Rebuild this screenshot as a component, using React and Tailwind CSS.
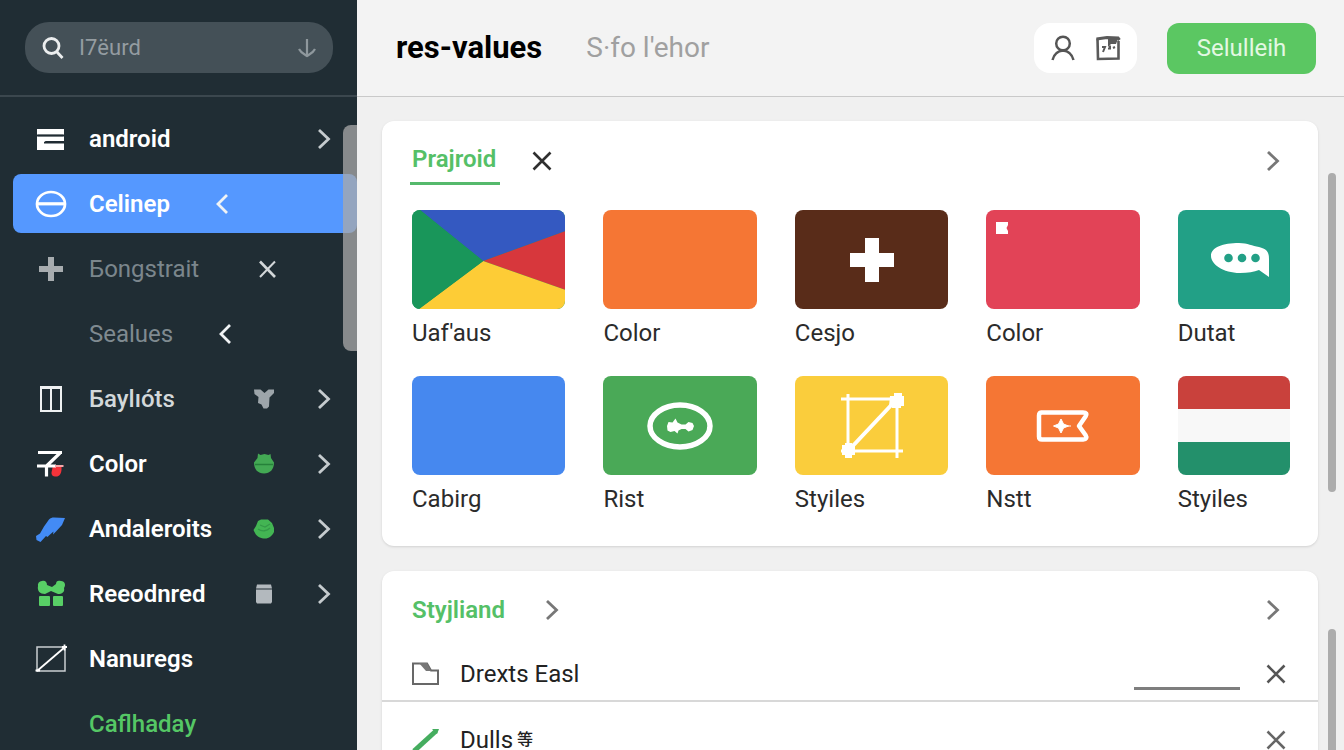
import { useState } from 'react'

const Chevron = ({ left = false, className = '' }) => (
  <svg viewBox="0 0 16 24" className={`w-4 h-6 shrink-0 ${className}`} fill="none" stroke="currentColor" strokeWidth="2.8">
    {left ? <path d="M13 3 4 12l9 9" /> : <path d="m2 3 9.500 9L2 21" />}
  </svg>
)

const Cross = ({ className = '' }) => (
  <svg viewBox="0 0 20 20" className={`w-5 h-5 shrink-0 ${className}`} fill="none" stroke="currentColor" strokeWidth="2.6">
    <path d="m1.5 1.5 17 17m0-17-17 17" />
  </svg>
)

// Iconos del menú lateral
const icons = {
  stack: (
    <svg viewBox="0 0 32 32" className="w-8 h-8" fill="#fff">
      <path d="M2 6h27v5.500H2zM2 13.500h27v4.500H11l-2 1v1.500h20V27H2z" />
      <path d="M3 12.500h25M10 19.300h19" stroke="#202c33" strokeWidth="1.500" />
    </svg>
  ),
  minusCircle: (
    <svg viewBox="0 0 32 32" className="w-8 h-8" fill="none" stroke="#fff" strokeWidth="2.700">
      <ellipse cx="16" cy="16" rx="14" ry="12" />
      <path d="M3 15.800h26" strokeWidth="3.200" />
    </svg>
  ),
  plus: (
    <svg viewBox="0 0 32 32" className="w-8 h-8" fill="none" stroke="#a7acaf" strokeWidth="6">
      <path d="M16 4v24M4 16h24" />
    </svg>
  ),
  columns: (
    <svg viewBox="0 0 32 32" className="w-8 h-8" fill="none" stroke="#eef1f2" strokeWidth="2">
      <path d="M6 4h20v24H6zM16 4v24" />
      <path d="M5 4.500h22" strokeWidth="3" />
    </svg>
  ),
  tint: (
    <svg viewBox="0 0 32 32" className="w-8 h-8" fill="none">
      <path d="M18 17.500h8.500v4.500c-.5 4-2 6.500-5.500 6.500s-4.500-1.500-4.500-4z" fill="#f5333a" />
      <path d="M3 4.500h24M25 5 11.500 18v10.500M2 18h19" stroke="#fff" strokeWidth="3.200" />
      <path d="M20 18h8.500" stroke="#f4a7aa" strokeWidth="2" />
    </svg>
  ),
  brush: (
    <svg viewBox="0 0 32 32" className="w-8 h-8" fill="#438bf5">
      <path d="M14 6.500c1.500-1.500 3-2 5-2l11 .5-3 7-6 6.500-3 3 .5-3-4 3.500-2 2-1.500-1-5.500 6-4-2-.5-4 4-2.500 4-7z" />
    </svg>
  ),
  gift: (
    <svg viewBox="0 0 32 32" className="w-8 h-8" fill="#58cf66">
      <rect x="4" y="18" width="11" height="10" rx="1" />
      <rect x="18" y="18" width="10" height="10" rx="1" />
      <path d="M3 8a4 4 0 0 1 4-5c3-1 5 1 5 4l5 2 4-3c0-3 2-4 5-3 4 0 5 4 3 7 1 4-2 6-6 6L16 13l-6 3C5 16 2 13 3 8z" />
    </svg>
  ),
  vector: (
    <svg viewBox="0 0 32 32" className="w-8 h-8" fill="none" stroke="#c9ced1" strokeWidth="1.500">
      <path d="M2 4h28v24H2z" />
      <path d="M2 28 30 4" stroke="#fff" strokeWidth="1.800" />
      <path d="M27 4h6M29.500 1.500v6M.5 27.500H5" stroke="#fff" strokeWidth="1.800" />
    </svg>
  ),
}

const badges = {
  cross: (
    <svg viewBox="0 0 24 24" className="w-6 h-6" fill="none" stroke="#d3d7d9">
      <path d="M8 4.500 23 20" strokeWidth="2.600" />
      <path d="M23 4.500 8 20" strokeWidth="2" />
    </svg>
  ),
  shirt: (
    <svg viewBox="0 0 24 24" className="w-6 h-6" fill="#9da5aa">
      <path d="M2 2.500h6.500l4 3.500 4-3.500H22V6l-4.500 4.500-.5 9-2 2h-3.500l-2-4L6 16l.5-6L2.500 7z" />
    </svg>
  ),
  bot: (
    <svg viewBox="0 0 24 24" className="w-6 h-6" fill="#43a954">
      <path d="m6 1.500 2.500 1.500 4-1 4 1 2-1 .5 4 3 4.500c0 7-4 11-10 11s-10-4-10-11L5.500 6z" />
      <path d="M3 12.500h18" stroke="#26813a" strokeWidth="1.500" />
    </svg>
  ),
  leaf: (
    <svg viewBox="0 0 24 24" className="w-6 h-6" fill="#43b553">
      <path d="m6 4 3-1.500h7l4 3.500 2 5v4c-2 4-5 6.500-9 6.500s-8-1.500-10-5.500L1.500 13 4 9z" />
      <path d="m8 8 5 2 5-3M6 12c4 3 9 2 12-1" fill="none" stroke="#349a48" strokeWidth="1.300" />
    </svg>
  ),
  jar: (
    <svg viewBox="0 0 24 24" className="w-6 h-6" fill="#b3b9be">
      <path d="M5 2.500h14l1 4H4zM4 7.500h16V20l-1 1.500H5L4 20z" />
    </svg>
  ),
}

const menu = [
  { icon: 'stack', label: 'android', chevron: true, tone: 'text-white font-semibold' },
  { icon: 'minusCircle', label: 'Celinep', back: true, tone: 'text-white font-semibold' },
  { icon: 'plus', label: 'Бongstrait', badge: 'cross', tone: 'text-[#7b868c]' },
  { label: 'Sealues', back: true, tone: 'text-[#7f8a90]' },
  { icon: 'columns', label: 'Бaylıóts', badge: 'shirt', chevron: true, tone: 'text-[#d3d8da] font-medium' },
  { icon: 'tint', label: 'Color', badge: 'bot', chevron: true, tone: 'text-white font-semibold' },
  { icon: 'brush', label: 'Andaleroits', badge: 'leaf', chevron: true, tone: 'text-white font-semibold' },
  { icon: 'gift', label: 'Reeodnred', badge: 'jar', chevron: true, tone: 'text-white font-semibold' },
  { icon: 'vector', label: 'Nanuregs', tone: 'text-white font-semibold' },
  { label: 'Caflhaday', tone: 'text-[#55c765] font-medium' },
]

// Dibujos de cada muestra
const flagFan = (
  <svg viewBox="0 0 153 99" preserveAspectRatio="none" className="w-full h-full">
    <path d="M8 0h145v21L71 51z" fill="#3459c1" />
    <path d="M153 21v59L71 51z" fill="#d7373c" />
    <path d="M153 80v19H7l64-48z" fill="#fdcc36" />
    <path d="M8 0 71 51 7 99H0V0z" fill="#19965a" />
  </svg>
)

const flagStripes = (
  <div className="flex flex-col w-full h-full">
    <div className="flex-1 bg-[#c9413c]" />
    <div className="flex-1 bg-[#f8f8f8]" />
    <div className="flex-1 bg-[#23906b]" />
  </div>
)

const bigPlus = (
  <svg viewBox="0 0 44 44" className="w-11 h-11" fill="#fff">
    <path d="M15 0h14v15h15v14H29v15H15V29H0V15h15z" />
  </svg>
)

const cornerMark = (
  <svg viewBox="0 0 12 12" className="w-3 h-3 self-start mr-auto ml-2.5 mt-3" fill="#fff">
    <path d="M0 0h12v3l-1.500 3L12 9v3H0z" />
  </svg>
)

const bubble = (
  <svg viewBox="0 0 60 36" className="w-[60px] h-9 ml-3" fill="#fff">
    <path d="M1 14C1 5 13 1 29 1c9 0 13 3 20 4 8 2 10 5 10 12v18l-10-7c-5 2-11 3-19 3C13 31 1 22 1 14z" />
    <circle cx="18.500" cy="16" r="4.300" fill="#22a086" />
    <circle cx="32" cy="16" r="4.300" fill="#22a086" />
    <circle cx="45.500" cy="16" r="4.300" fill="#22a086" />
  </svg>
)

const ring = (
  <svg viewBox="0 0 66 48" className="w-[66px] h-12" fill="none">
    <ellipse cx="33" cy="24" rx="30" ry="21" stroke="#fff" strokeWidth="5.500" />
    <path d="m20 24 1.500-4 4 .5 3-4 2 4 4 2h4l3-2.500 4 1 1.500 3-1.500 4-4 1.500-3-2.500h-4l-3 1.500-1 3-3-2.500-4 1-3-1.500z" fill="#fff" />
  </svg>
)

const bezier = (
  <svg viewBox="0 0 64 66" className="w-16 h-[66px]" fill="none" stroke="#fff" strokeWidth="3">
    <path d="M1 6h60M1 58h62M8 1v58M57 6v59" />
    <path d="M8 58 57 6" strokeWidth="4" />
    <path d="M50 3h4V0h8v3h2v10h-3v2h-9v-2h-3zM2 52h3v-2h7v2h3v10h-3v3H5v-3H2z" fill="#fff" stroke="none" />
  </svg>
)

const ticket = (
  <svg viewBox="0 0 54 34" className="w-[54px] h-[34px]" fill="none" stroke="#fff" strokeWidth="4.500" strokeLinejoin="round">
    <path d="M5 3.500h42q5 0 2.500 4L43 17l6.500 9q2.500 4-2.500 4.500H6q-3 0-3-3v-21q0-3 3-3z" />
    <path d="m25 10 2.500 5 5 2-5 2-2.500 5-2.500-5-5-2 5-2zM32 17h3" fill="#fff" strokeWidth="1" />
  </svg>
)

const swatches = [
  { label: "Uaf'aus", bg: 'bg-[#19965a]', art: flagFan },
  { label: 'Color', bg: 'bg-[#f57634]' },
  { label: 'Cesjo', bg: 'bg-[#592c19]', art: bigPlus },
  { label: 'Color', bg: 'bg-[#e24357]', art: cornerMark },
  { label: 'Dutat', bg: 'bg-[#22a086]', art: bubble },
  { label: 'Cabirg', bg: 'bg-[#4688ef]' },
  { label: 'Rist', bg: 'bg-[#4aa957]', art: ring },
  { label: 'Styiles', bg: 'bg-[#facd3c]', art: bezier },
  { label: 'Nstt', bg: 'bg-[#f57634]', art: ticket },
  { label: 'Styiles', bg: 'bg-[#f8f8f8]', art: flagStripes },
]

function Sidebar() {
  const [active, setActive] = useState('Celinep')

  return (
    <aside className="relative w-[357px] shrink-0 bg-[#202d34] overflow-hidden">
      <div className="h-[95px] box-content border-b-2 border-[#3b474e] pl-[25px] pr-6 flex items-center">
        <label className="flex items-center w-full h-[51px] rounded-3xl bg-[#445057] pl-4 pr-4">
          <svg viewBox="0 0 24 24" className="w-6 h-6 shrink-0" fill="none" stroke="#eceeef" strokeWidth="2.800">
            <circle cx="10.500" cy="10" r="7.500" />
            <path d="m15.500 15.500 6 6.500" />
          </svg>
          <input type="text" aria-label="Buscar" placeholder="I7ëurd" className="flex-1 min-w-0 ml-[14px] bg-transparent outline-none text-[22px] text-white placeholder:text-[#949ca1]" />
          <svg viewBox="0 0 20 20" className="w-5 h-5 shrink-0" fill="none" stroke="#8f989d" strokeWidth="2.200">
            <path d="M10 1v17M2 11c2 4 5 5 8 7 3-2 6-3 8-7" />
          </svg>
        </label>
      </div>

      <nav className="flex flex-col gap-1.5 pt-3 pl-[13px]">
        {menu.map((item) => (
          <button
            key={item.label}
            onClick={() => setActive(item.label)}
            className={`flex items-center h-[59px] shrink-0 rounded-lg pl-[22px] pr-6 text-2xl text-left ${item.tone} ${active === item.label ? 'bg-[#5598ff]' : ''}`}
          >
            <span className="w-8 shrink-0 mr-[22px]">{icons[item.icon]}</span>
            {item.back ? (
              <span className="flex items-center gap-11">
                {item.label}
                <Chevron left className="text-[#f0f3f5]" />
              </span>
            ) : (
              <span className="w-[163px] shrink-0">{item.label}</span>
            )}
            {item.badge && badges[item.badge]}
            {item.chevron && <Chevron className="ml-auto text-[#c5cbce]" />}
          </button>
        ))}
      </nav>

      {/* Barra de desplazamiento sobre el menú */}
      <div className="absolute right-0 top-[125px] w-3.5 h-[226px] rounded-l-lg bg-[#a9a9a9]/75" />
    </aside>
  )
}

function Header() {
  return (
    <header className="flex items-center h-24 box-content shrink-0 border-b border-[#c9c9c9] bg-[#f3f3f3] pl-[39px] pr-7">
      <h1 className="text-[31px] font-bold text-black">res-values</h1>
      <span className="ml-11 text-[28px] text-[#a0a0a0]">S·fo l'ehor</span>
      <div className="ml-auto flex items-center justify-center gap-4 w-[103px] h-[50px] rounded-2xl bg-white">
        <button aria-label="Usuario">
          <svg viewBox="0 0 28 28" className="w-7 h-7" fill="none" stroke="#555" strokeWidth="2.500">
            <circle cx="13" cy="9.500" r="6.800" />
            <path d="M2.500 26C4 20 8 17 13 16.500 18 17 22 20 23.500 26" />
          </svg>
        </button>
        <button aria-label="Paquete">
          <svg viewBox="0 0 28 28" className="w-7 h-7" fill="none" stroke="#5a5a5a" strokeWidth="2.600">
            <path d="M3.500 4.500 4 25l20.500-.5V7" />
            <path d="M2.500 5 13 3.500l11 .5 1.500 2" strokeWidth="3" />
            <path d="M14 5h10l-2 5h-5l-3 3z" fill="#5a5a5a" stroke="none" />
            <path d="M8 13h3l-2 5M14 14.500h2v-3M19 14l2-1" strokeWidth="2" />
          </svg>
        </button>
      </div>
      <button className="ml-[30px] w-[149px] h-[51px] rounded-xl bg-[#5bc762] text-2xl text-[#e3f8e3]">Selulleih</button>
    </header>
  )
}

export default function App() {
  const [filtro, setFiltro] = useState('')

  return (
    <div className="flex h-screen overflow-hidden font-[Roboto,'Noto_Sans_CJK_SC',sans-serif]">
      <Sidebar />

      <main className="flex flex-col flex-1 min-w-0 bg-[#f0f0f0]">
        <Header />

        <div className="flex flex-col gap-[25px] pt-6 pl-[25px] overflow-hidden">
          <div className="flex shrink-0">
            <section className="flex-1 bg-white rounded-xl shadow-sm pt-[15px] pb-[33px] pl-[30px] pr-7">
              <div className="flex items-center">
                <button className="-ml-0.5 pl-0.5 pr-1 h-[49px] border-b-[3px] border-[#55b96c] text-2xl font-semibold text-[#55c067]">Prajroid</button>
                <button aria-label="Cerrar pestaña" className="ml-8 text-[#2f2f2f]"><Cross /></button>
                <button aria-label="Ver muestras" className="ml-auto mr-2 text-[#777]"><Chevron /></button>
              </div>
              <ul className="grid grid-cols-[repeat(4,153fr)_112fr] gap-x-[38px] gap-y-[29px] mt-[25px]">
                {swatches.map((s, idx) => (
                  <li key={idx}>
                    <div className={`flex items-center justify-center h-[99px] rounded-lg overflow-hidden ${s.bg}`}>{s.art}</div>
                    <p className="mt-2.5 text-2xl leading-7 text-[#2b2b2b]">{s.label}</p>
                  </li>
                ))}
              </ul>
            </section>
            <div className="w-[26px] shrink-0 pl-2.5 pt-[52px]">
              <div className="w-2 h-[319px] rounded-full bg-[#acacac]" />
            </div>
          </div>

          <div className="flex shrink-0">
            <section className="flex-1 bg-white rounded-xl shadow-sm pt-[14px]">
              <div className="flex items-center h-[50px] pl-[30px] pr-9">
                <h2 className="text-2xl font-semibold text-[#55c067]">Styjliand</h2>
                <button aria-label="Abrir estilos" className="ml-10 text-[#777]"><Chevron /></button>
                <button aria-label="Ver estilos" className="ml-auto text-[#777]"><Chevron /></button>
              </div>
              <div className="flex items-center h-[67px] pt-3 border-b-2 border-[#d8d8d8] pl-[30px] pr-8">
                <svg viewBox="0 0 28 28" className="w-7 h-7 shrink-0" fill="none" stroke="#686868" strokeWidth="2">
                  <path d="M1 3.500h14l4 7h7V24H1z" />
                  <path d="m7 3 7 8h5l-4-8z" fill="#777" stroke="none" />
                </svg>
                <label htmlFor="filtro" className="ml-5 text-2xl text-[#222]">Drexts Easl</label>
                <input id="filtro" type="text" value={filtro} onChange={(e) => setFiltro(e.target.value)} className="ml-auto w-[106px] h-8 border-b-[3px] border-[#7e7e7e] outline-none" />
                <button aria-label="Quitar Drexts" className="ml-[26px] text-[#555]"><Cross /></button>
              </div>
              <div className="flex items-center h-[76px] pl-[30px] pr-8">
                <svg viewBox="0 0 28 28" className="w-7 h-7 shrink-0" fill="none" stroke="#45ad5f" strokeWidth="5">
                  <path d="M2 25 24 5" />
                  <path d="M20 3h7l-2 5z" fill="#45ad5f" stroke="none" />
                </svg>
                <span className="ml-5 flex items-center gap-1 text-2xl leading-7 text-[#222]">Dulls <span className="text-base leading-4 font-medium">等</span></span>
                <button aria-label="Quitar Dulls" className="ml-auto text-[#666]"><Cross /></button>
              </div>
            </section>
            <div className="w-[26px] shrink-0 pl-2.5 pt-[58px]">
              <div className="w-2 h-full rounded-t-full bg-[#acacac]" />
            </div>
          </div>
        </div>
      </main>
    </div>
  )
}
